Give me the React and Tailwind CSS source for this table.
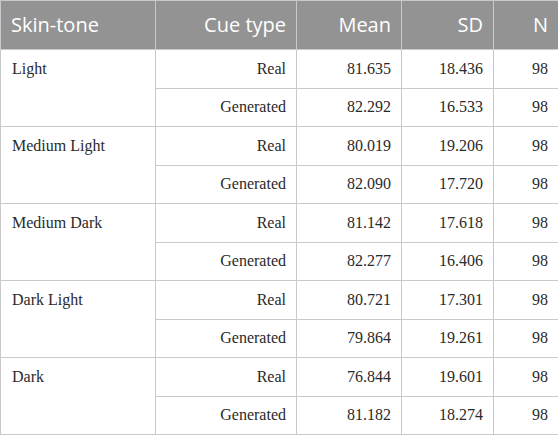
import React from "react";

const groups = [
  ["Light", [["Real", "81.635", "18.436", "98"], ["Generated", "82.292", "16.533", "98"]]],
  ["Medium Light", [["Real", "80.019", "19.206", "98"], ["Generated", "82.090", "17.720", "98"]]],
  ["Medium Dark", [["Real", "81.142", "17.618", "98"], ["Generated", "82.277", "16.406", "98"]]],
  ["Dark Light", [["Real", "80.721", "17.301", "98"], ["Generated", "79.864", "19.261", "98"]]],
  ["Dark", [["Real", "76.844", "19.601", "98"], ["Generated", "81.182", "18.274", "98"]]],
];

export default function App() {
  return (
    <div className="w-[558px] h-[435px] bg-white">
      <table className="w-[558px] border-collapse table-fixed">
        <colgroup>
          <col className="w-[155px]" />
          <col className="w-[141px]" />
          <col className="w-[105px]" />
          <col className="w-[92px]" />
          <col className="w-[65px]" />
        </colgroup>
        <thead>
          <tr className="h-[49px] bg-[#939393] text-white text-[20px] font-['Open_Sans',sans-serif]">
            <th className="border border-[#c9c9c9] px-[10px] text-left font-normal">Skin-tone</th>
            <th className="border border-[#c9c9c9] px-[10px] text-right font-normal">Cue type</th>
            <th className="border border-[#c9c9c9] px-[10px] text-right font-normal">Mean</th>
            <th className="border border-[#c9c9c9] px-[10px] text-right font-normal">SD</th>
            <th className="border border-[#c9c9c9] px-[10px] text-right font-normal">N</th>
          </tr>
        </thead>
        <tbody className="font-['Liberation_Serif',serif] text-[16px] text-[#2a2a2a]">
          {groups.map(([name, rows]) =>
            rows.map((r, i) => (
              <tr key={name + i} className="h-[38.5px]">
                {i === 0 && (
                  <td rowSpan={2} className="border border-[#c9c9c9] px-[11px] pt-[7px] align-top">
                    {name}
                  </td>
                )}
                {r.map((v, j) => (
                  <td key={j} className="border border-[#c9c9c9] px-[10px] text-right align-middle">
                    {v}
                  </td>
                ))}
              </tr>
            ))
          )}
        </tbody>
      </table>
    </div>
  );
}
